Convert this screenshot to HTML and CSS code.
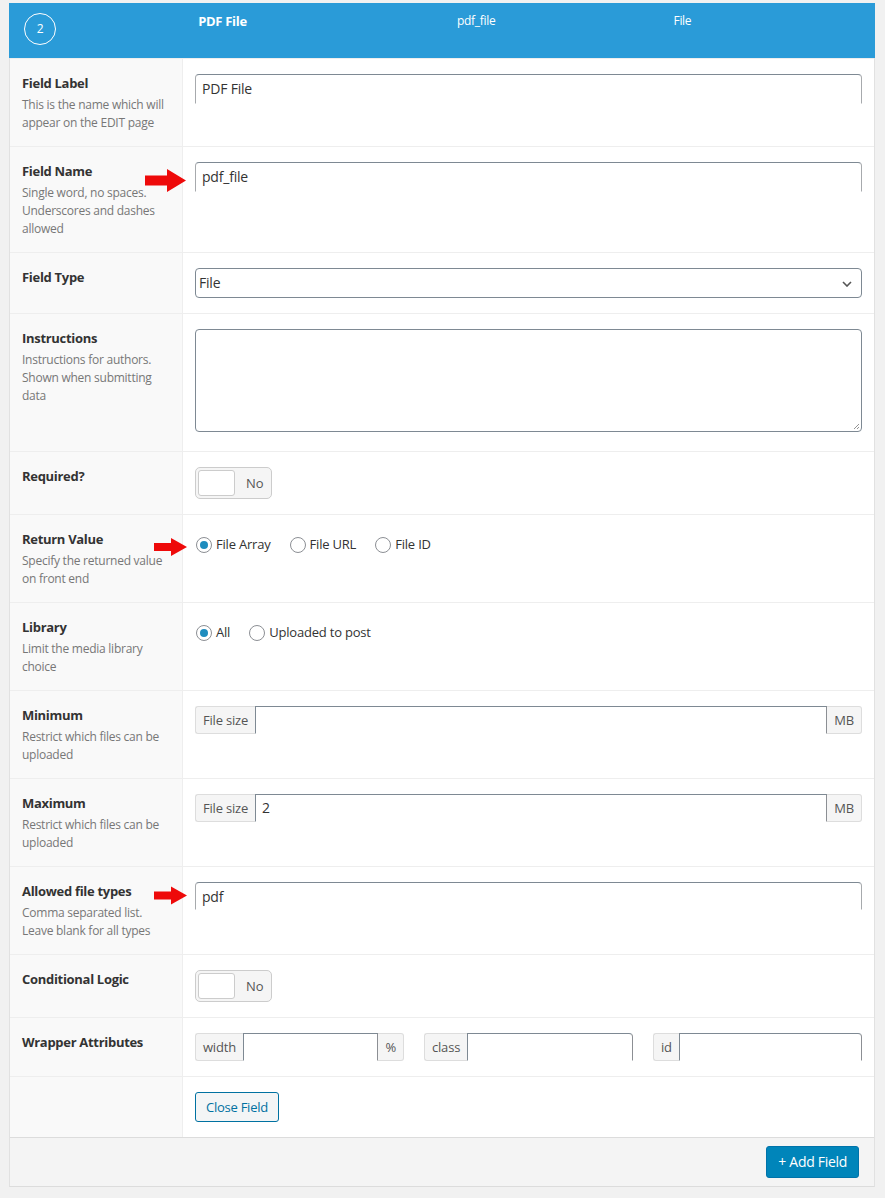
FILE: index.html
```html
<!DOCTYPE html>
<html lang="en">
<head>
<meta charset="utf-8">
<title>ACF field – PDF File</title>
<link rel="stylesheet" href="styles.css">
</head>
<body>
<div class="panel">
  <div class="field-head">
    <div class="col col-order"><span class="order">2</span></div>
    <div class="col col-label">PDF File</div>
    <div class="col col-name">pdf_file</div>
    <div class="col col-type">File</div>
  </div>

  <div class="row">
    <div class="label"><div class="title">Field Label</div><div class="desc">This is the name which will appear on the EDIT page</div></div>
    <div class="input"><div class="text">PDF File</div></div>
  </div>

  <div class="row">
    <svg class="arrow arrow-big" viewBox="0 0 41 23"><path d="M0 6.5H22V0L41 11.5L22 23V16.5H0Z" fill="#ee0a0a"/></svg>
    <div class="label"><div class="title">Field Name</div><div class="desc">Single word, no spaces. Underscores and dashes allowed</div></div>
    <div class="input"><div class="text">pdf_file</div></div>
  </div>

  <div class="row">
    <div class="label"><div class="title">Field Type</div></div>
    <div class="input">
      <div class="select">File
        <svg class="chev" viewBox="0 0 10 6"><path d="M1 1L5 5L9 1" fill="none" stroke="#555" stroke-width="1.6"/></svg>
      </div>
    </div>
  </div>

  <div class="row">
    <div class="label"><div class="title">Instructions</div><div class="desc">Instructions for authors. Shown when submitting data</div></div>
    <div class="input">
      <div class="textarea">
        <svg class="grip" viewBox="0 0 8 8"><path d="M7 2L2 7M7 5L5 7" stroke="#888" stroke-width="0.9"/></svg>
      </div>
    </div>
  </div>

  <div class="row">
    <div class="label"><div class="title">Required?</div></div>
    <div class="input"><div class="toggle"><span class="knob"></span><span class="toggle-text">No</span></div></div>
  </div>

  <div class="row">
    <svg class="arrow arrow-small" viewBox="0 0 33 18"><path d="M0 5H17V0L33 9L17 18V13H0Z" fill="#ee0a0a"/></svg>
    <div class="label"><div class="title">Return Value</div><div class="desc">Specify the returned value on front end</div></div>
    <div class="input">
      <ul class="radios">
        <li><span class="radio checked"></span>File Array</li>
        <li><span class="radio"></span>File URL</li>
        <li><span class="radio"></span>File ID</li>
      </ul>
    </div>
  </div>

  <div class="row">
    <div class="label"><div class="title">Library</div><div class="desc">Limit the media library choice</div></div>
    <div class="input">
      <ul class="radios">
        <li><span class="radio checked"></span>All</li>
        <li><span class="radio"></span>Uploaded to post</li>
      </ul>
    </div>
  </div>

  <div class="row">
    <div class="label"><div class="title">Minimum</div><div class="desc">Restrict which files can be uploaded</div></div>
    <div class="input">
      <div class="group"><span class="addon pre">File size</span><span class="gin"></span><span class="addon post">MB</span></div>
    </div>
  </div>

  <div class="row">
    <div class="label"><div class="title">Maximum</div><div class="desc">Restrict which files can be uploaded</div></div>
    <div class="input">
      <div class="group"><span class="addon pre">File size</span><span class="gin">2</span><span class="addon post">MB</span></div>
    </div>
  </div>

  <div class="row">
    <svg class="arrow arrow-small arrow-types" viewBox="0 0 33 18"><path d="M0 5H17V0L33 9L17 18V13H0Z" fill="#ee0a0a"/></svg>
    <div class="label"><div class="title">Allowed file types</div><div class="desc">Comma separated list. Leave blank for all types</div></div>
    <div class="input"><div class="text short">pdf</div></div>
  </div>

  <div class="row">
    <div class="label"><div class="title">Conditional Logic</div></div>
    <div class="input"><div class="toggle"><span class="knob"></span><span class="toggle-text">No</span></div></div>
  </div>

  <div class="row">
    <div class="label"><div class="title">Wrapper Attributes</div></div>
    <div class="input">
      <div class="wrapper-grid">
        <div class="group"><span class="addon pre">width</span><span class="gin"></span><span class="addon post">%</span></div>
        <div class="group"><span class="addon pre">class</span><span class="gin end"></span></div>
        <div class="group"><span class="addon pre">id</span><span class="gin end"></span></div>
      </div>
    </div>
  </div>

  <div class="row">
    <div class="label"></div>
    <div class="input"><span class="btn-close">Close Field</span></div>
  </div>

  <div class="foot"><span class="btn-add">+ Add Field</span></div>
</div>
</body>
</html>
```

FILE: styles.css
```css
* { box-sizing: border-box; }
body {
  margin: 0;
  background: #f1f1f1;
  font-family: "Open Sans", "Segoe UI", Arial, sans-serif;
  color: #333;
  font-size: 13px;
}
.panel {
  margin: 3px 10px 0 9px;
  width: 866px;
  background: #fff;
  border-left: 1px solid #e1e1e1;
  border-right: 1px solid #e1e1e1;
  border-bottom: 1px solid #dcdcdc;
}
.field-head {
  display: grid;
  grid-template-columns: 20% 30% 25% 25%;
  height: 55px;
  background: #2a9bd8;
  color: #fff;
  margin: 0 -1px;
}
.col {
  padding: 9px 0 0 15px;
  line-height: 18px;
  font-size: 12px;
  letter-spacing: -0.3px;
}
.col-order { padding: 10px 0 0 15px; }
.col-label { font-weight: 700; font-size: 13px; padding-left: 16px; }
.order {
  display: flex;
  align-items: center;
  justify-content: center;
  width: 32px;
  height: 32px;
  border: 1px solid #fff;
  border-radius: 50%;
  font-size: 12px;
}
.row {
  position: relative;
  display: grid;
  grid-template-columns: 173px 1fr;
  border-top: 1px solid #eee;
}
.label {
  background: #f9f9f9;
  border-right: 1px solid #eee;
  padding: 15px 12px;
}
.title {
  font-weight: 700;
  font-size: 13px;
  line-height: 18px;
  color: #333;
  letter-spacing: -0.3px;
}
.desc {
  margin-top: 3px;
  padding-top: 1px;
  font-size: 12px;
  line-height: 18px;
  color: #777;
  letter-spacing: -0.25px;
  margin-bottom: -1px;
}
.input { padding: 15px 12px; }
.text {
  height: 30px;
  border: 1px solid;
  border-color: #7e8993 #a7aaad transparent #a7aaad;
  border-radius: 4px 4px 0 0;
  padding: 0 6px;
  font-size: 14px;
  line-height: 28px;
  color: #333;
  letter-spacing: -0.2px;
}
.text.short { height: 28px; line-height: 27px; }
.select {
  position: relative;
  height: 30px;
  border: 1px solid #7e8993;
  border-radius: 4px;
  padding: 0 3px;
  font-size: 14px;
  line-height: 28px;
  color: #333;
  letter-spacing: -0.2px;
}
.chev {
  position: absolute;
  right: 9px;
  top: 12px;
  width: 10px;
  height: 6px;
}
.textarea {
  position: relative;
  height: 103px;
  margin-bottom: 4px;
  border: 1px solid #7e8993;
  border-radius: 4px;
}
.grip {
  position: absolute;
  right: 1px;
  bottom: 1px;
  width: 8px;
  height: 8px;
}
.toggle {
  display: flex;
  align-items: center;
  width: 77px;
  height: 32px;
  background: #f5f5f5;
  border: 1px solid #ccc;
  border-radius: 5px;
  padding: 2px;
}
.knob {
  width: 37px;
  height: 26px;
  background: #fff;
  border: 1px solid #ccc;
  border-radius: 3px;
}
.toggle-text {
  margin-left: 11px;
  font-size: 13px;
  color: #555;
}
.radios {
  list-style: none;
  margin: 0;
  padding: 4px 0 0 1px;
  display: flex;
  gap: 19px;
}
.radios li {
  display: flex;
  align-items: center;
  gap: 4px;
  line-height: 20px;
  font-size: 13px;
  color: #333;
  letter-spacing: -0.2px;
}
.radio {
  width: 16px;
  height: 16px;
  border: 1px solid #8c8f94;
  border-radius: 50%;
  background: #fff;
  display: flex;
  align-items: center;
  justify-content: center;
  margin-top: 1px;
}
.radio.checked::after {
  content: "";
  width: 8px;
  height: 8px;
  border-radius: 50%;
  background: #1e8cbe;
}
.group {
  display: flex;
  height: 28px;
}
.addon {
  display: flex;
  align-items: center;
  background: #f5f5f5;
  border: 1px solid #ddd;
  color: #555;
  font-size: 13px;
  padding: 0 7px;
  letter-spacing: -0.2px;
}
.addon.pre { border-radius: 3px 0 0 3px; border-right: 0; }
.addon.post { border-radius: 0 3px 3px 0; border-left: 0; }
.gin {
  flex: 1;
  border: 1px solid;
  border-color: #7e8993 #8c8f94 transparent #7e8993;
  padding: 0 6px;
  font-size: 14px;
  line-height: 26px;
  color: #333;
}
.gin.end { border-radius: 0 4px 0 0; border-right-color: #8c8f94; }
.wrapper-grid {
  display: grid;
  grid-template-columns: 1fr 1fr 1fr;
  gap: 20px;
}
.btn-close {
  display: inline-block;
  height: 30px;
  line-height: 28px;
  padding: 0 10px;
  border: 1px solid #0071a1;
  border-radius: 3px;
  background: #f3f5f6;
  color: #0071a1;
  font-size: 13px;
  letter-spacing: -0.25px;
}
.foot {
  display: flex;
  justify-content: flex-end;
  padding: 8px 15px 8px;
  background: #f4f4f4;
  border-top: 1px solid #dcdcdc;
}
.btn-add {
  display: inline-block;
  height: 32px;
  line-height: 30px;
  padding: 0 11px;
  background: #0085ba;
  border: 1px solid #0073aa;
  border-radius: 3px;
  color: #fff;
  font-size: 14px;
  letter-spacing: -0.3px;
}
.arrow { position: absolute; }
.arrow-big { left: 135px; top: 22px; width: 41px; height: 23px; }
.arrow-small { left: 144px; top: 23px; width: 33px; height: 18px; }
.arrow-types { top: 19px; height: 19px; }
```
